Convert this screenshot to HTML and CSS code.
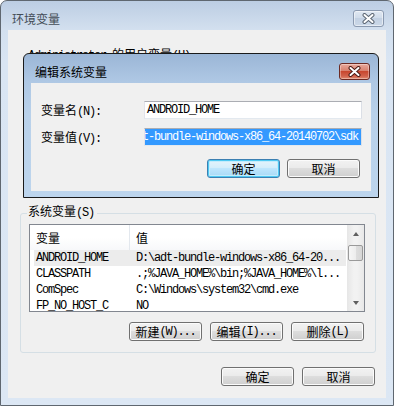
FILE: index.html
```html
<!DOCTYPE html>
<html lang="zh-CN">
<head>
<meta charset="utf-8">
<title>环境变量</title>
<link rel="stylesheet" href="styles.css">
</head>
<body>
<div class="win outer">
  <div class="titlebar">
    <span class="title title-inactive">环境变量</span>
    <span class="close close-inactive">
      <svg width="13" height="11" viewBox="0 0 13 11" aria-hidden="true"><path class="x-outline" d="M2.5 2 L10.5 9 M10.5 2 L2.5 9"/><path class="x-fill" d="M2.5 2 L10.5 9 M10.5 2 L2.5 9"/></svg>
    </span>
  </div>
  <div class="client">
    <div class="user-label"><span class="a">Administrator </span>的用户变量<span class="a">(U)</span></div>
    <div class="user-area"></div>
    <fieldset class="group">
      <legend>系统变量<span class="a">(S)</span></legend>
      <div class="list">
        <div class="list-main">
          <div class="list-head"><span class="c1">变量</span><span class="c2">值</span></div>
          <div class="row sel"><span class="c1 a">ANDROID_HOME</span><span class="c2 a">D:\adt-bundle-windows-x86_64-20...</span></div>
          <div class="row"><span class="c1 a">CLASSPATH</span><span class="c2 a">.;%JAVA_HOME%\bin;%JAVA_HOME%\l...</span></div>
          <div class="row"><span class="c1 a">ComSpec</span><span class="c2 a">C:\Windows\system32\cmd.exe</span></div>
          <div class="row"><span class="c1 a">FP_NO_HOST_C</span><span class="c2 a">NO</span></div>
        </div>
        <div class="scrollbar">
          <span class="sb-btn"><span class="tri up"></span></span>
          <span class="thumb"></span>
          <span class="sb-track"></span>
          <span class="sb-btn"><span class="tri down"></span></span>
        </div>
      </div>
      <div class="btn-row group-btns">
        <button class="btn">新建<span class="a">(W)...</span></button>
        <button class="btn">编辑<span class="a">(I)...</span></button>
        <button class="btn">删除<span class="a">(L)</span></button>
      </div>
    </fieldset>
    <div class="btn-row footer">
      <button class="btn">确定</button>
      <button class="btn">取消</button>
    </div>
  </div>

  <div class="win dialog">
    <div class="titlebar">
      <span class="title">编辑系统变量</span>
      <span class="close close-active">
        <svg width="13" height="11" viewBox="0 0 13 11" aria-hidden="true"><path class="x-outline" d="M2.5 2 L10.5 9 M10.5 2 L2.5 9"/><path class="x-fill" d="M2.5 2 L10.5 9 M10.5 2 L2.5 9"/></svg>
      </span>
    </div>
    <div class="client">
      <div class="form">
        <label>变量名<span class="a">(N):</span></label>
        <div class="input a">ANDROID_HOME</div>
        <label>变量值<span class="a">(V):</span></label>
        <div class="input a scrolled"><span class="sel-text">D:\adt-bundle-windows-x86_64-20140702\sdk</span></div>
      </div>
      <div class="btn-row dlg-btns">
        <button class="btn btn-default">确定</button>
        <button class="btn">取消</button>
      </div>
    </div>
  </div>
</div>
</body>
</html>
```

FILE: styles.css
```css
* { box-sizing: border-box; }
html, body { margin: 0; }
body {
  background: #fff;
  font-family: "Noto Sans CJK SC", "Noto Sans", sans-serif;
  font-size: 12px;
  line-height: 14px;
  color: #000;
}
.a {
  font-family: "Liberation Mono", "DejaVu Sans Mono", monospace;
  letter-spacing: -1.2px;
}

.win { display: flex; flex-direction: column; }

.outer {
  position: relative;
  width: 394px;
  height: 406px;
  border: 1px solid #5f6770;
  border-radius: 7px 7px 0 0;
  background: linear-gradient(#bccde3 0, #d3e0ef 29px, #d9e5f3 60px, #dce7f4 100%);
}

.titlebar {
  flex: none;
  height: 29px;
  display: flex;
  align-items: flex-start;
  justify-content: space-between;
  padding: 9px 9px 0 11px;
}
.title { line-height: 17px; white-space: nowrap; }
.title-inactive { color: #434c56; }

.close {
  width: 31px;
  height: 17px;
  border: 1px solid;
  border-radius: 3px;
  display: flex;
  align-items: center;
  justify-content: center;
}
.close-inactive {
  border-color: #8b9ab0;
  background: linear-gradient(#e0e8f2, #cfdbea 50%, #c3d1e3 50%, #cbd8e8);
  box-shadow: inset 0 0 0 1px rgba(255,255,255,.5);
}
.close-active {
  border-color: #6d2a23;
  background: linear-gradient(#e9a99c, #d8816f 45%, #c8472f 50%, #d1614a 80%, #e08a70);
  box-shadow: inset 0 0 0 1px rgba(255,255,255,.35);
}
.close svg path { fill: none; stroke-linecap: round; }
.x-outline { stroke: #5c6673; stroke-width: 4; }
.x-fill { stroke: #fff; stroke-width: 2; }
.close-active .x-outline { stroke: #4b1a14; }

.client {
  flex: 1;
  margin: 0 7px 7px;
  background: #f0f0f0;
  display: flex;
  flex-direction: column;
}

.user-label { flex: none; height: 14px; margin-top: 17px; padding-left: 20px; white-space: nowrap; }
.user-area { flex: none; height: 143px; }

.group {
  flex: none;
  margin: 0 10px 0 12px;
  padding: 2px 10px 11px 8px;
  border: 1px solid #d5dfe5;
  border-radius: 3px;
  min-width: 0;
}
.group legend {
  height: 18px;
  padding: 0 3px 4px 1px;
  margin-left: -2px;
  line-height: 14px;
  white-space: nowrap;
}

.list {
  height: 88px;
  border: 1px solid #828790;
  background: #fff;
  display: flex;
}
.list-main { flex: 1; min-width: 0; overflow: hidden; }
.list-head {
  height: 25px;
  display: flex;
  background: linear-gradient(#fff, #fff 50%, #f7f8fa);
}
.list-head span { display: flex; align-items: center; padding-left: 6px; }
.list-head .c1 { width: 100px; border-right: 1px solid #e3e8ee; }

.row {
  height: 16px;
  margin: 0 1px 0 4px;
  display: flex;
  align-items: center;
  white-space: nowrap;
}
.row .c1 { width: 96px; padding-left: 2px; flex: none; }
.row .c2 { padding-left: 6px; }
.row.sel { background: #ececec; }

.scrollbar {
  width: 17px;
  flex: none;
  display: flex;
  flex-direction: column;
  background: linear-gradient(90deg, #e6e6e6, #f2f2f2 40%, #f2f2f2 60%, #e8e8e8);
}
.sb-btn { height: 17px; display: flex; align-items: center; justify-content: center; }
.tri { width: 0; height: 0; border-left: 3.5px solid transparent; border-right: 3.5px solid transparent; }
.tri.up { border-bottom: 4px solid #606060; }
.tri.down { border-top: 4px solid #606060; }
.thumb {
  height: 16px;
  margin: 3px 1px 0;
  border: 1px solid #9a9a9a;
  border-radius: 2px;
  background: linear-gradient(90deg, #f6f6f6, #ededed 50%, #dedede 50%, #d6d6d6);
}
.sb-track { flex: 1; }

.btn-row { flex: none; display: flex; justify-content: flex-end; gap: 8px; }
.group-btns { margin-top: 10px; padding-right: 1px; }
.footer { margin-top: 14px; padding-right: 11px; }

.btn {
  width: 73px;
  height: 19px;
  padding: 0;
  font: inherit;
  color: #000;
  border: 1px solid #707070;
  border-radius: 3px;
  background: linear-gradient(#f2f2f2, #ebebeb 45%, #dddddd 50%, #cfcfcf);
  box-shadow: inset 0 0 0 1px #fbfbfb;
  display: flex;
  align-items: center;
  justify-content: center;
  white-space: nowrap;
}
.btn-default {
  border-color: #3c7fb1;
  background: linear-gradient(#e5f4fc, #d4eefb 45%, #bee6fd 50%, #a7d9f5);
  box-shadow: inset 0 0 0 1px #4fc9f2, inset 0 0 0 2px #c4ecfc;
}

.dialog {
  position: absolute;
  left: 22px;
  top: 52px;
  width: 356px;
  height: 145px;
  border: 1px solid #1a1a1a;
  border-radius: 6px 6px 0 0;
  background: linear-gradient(#9bb6d6 0, #afc8e4 28px, #b9d1ea 60px, #bdd5ed);
}
.dialog .titlebar { padding-right: 8px; }
.dialog .client { margin: 0 7px 6px; }

.form {
  display: grid;
  grid-template-columns: 103px 218px;
  grid-auto-rows: 18px;
  row-gap: 9px;
  padding: 18px 0 0 10px;
  align-items: center;
}
.form label { white-space: nowrap; height: 14px; }
.input {
  height: 18px;
  border: 1px solid;
  border-color: #abadb3 #dbdfe6 #e3e9ef #e2e3ea;
  background: #fff;
  padding: 0 2px;
  line-height: 16px;
  white-space: nowrap;
  overflow: hidden;
}
.input.scrolled { display: flex; justify-content: flex-end; padding: 0; }
.sel-text { flex: none; background: #3399ff; color: #fff; padding-right: 3px; }

.dlg-btns { margin-top: 13px; padding-right: 11px; gap: 7px; }
```
